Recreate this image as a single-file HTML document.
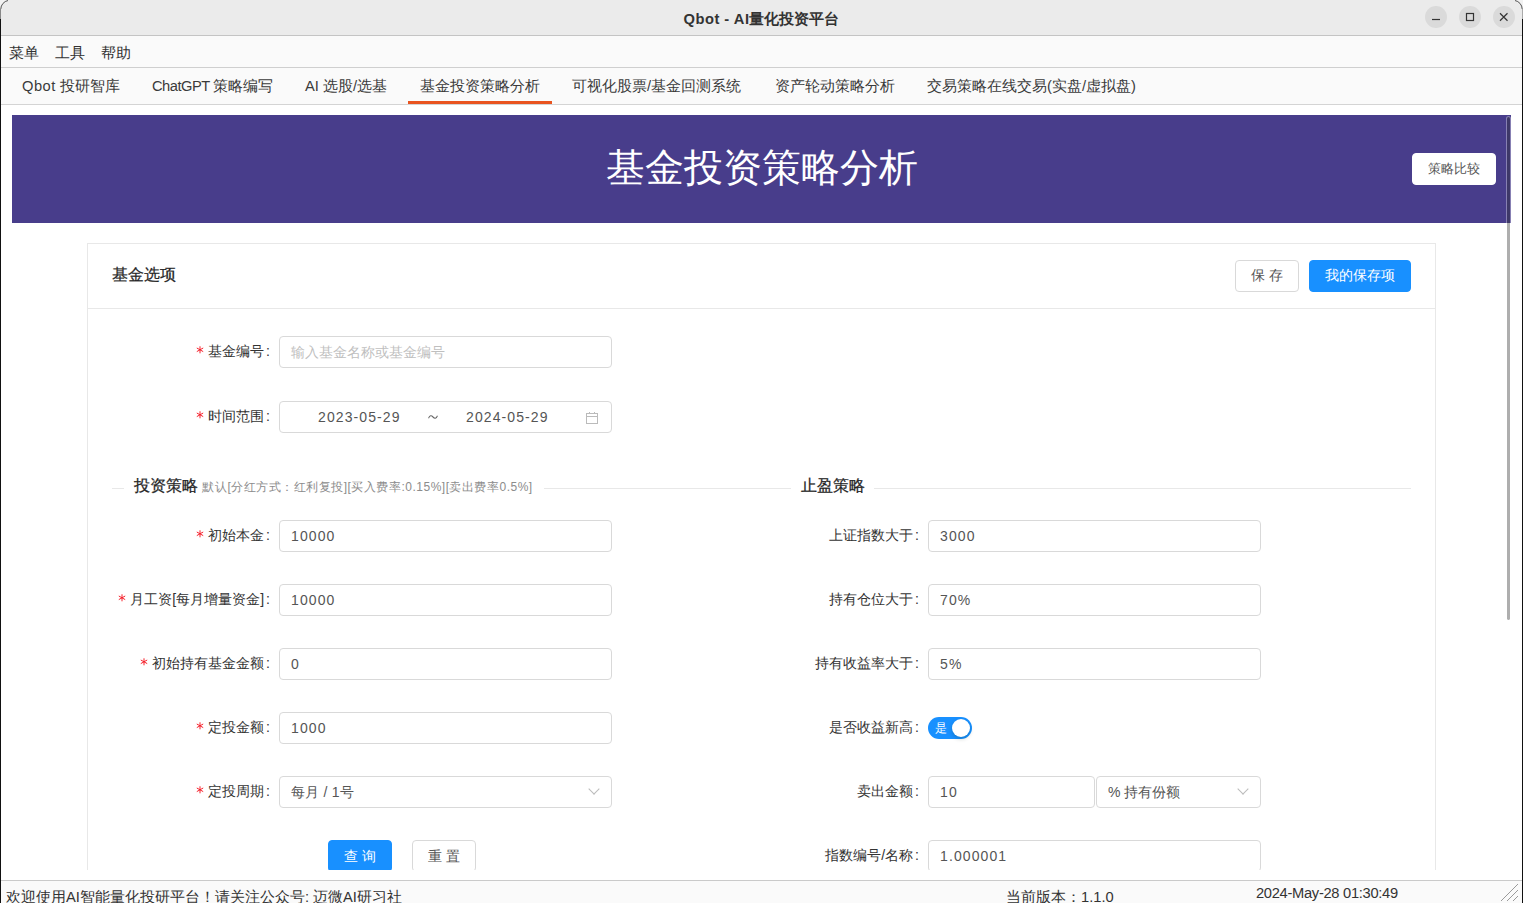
<!DOCTYPE html>
<html><head><meta charset="utf-8">
<style>
*{box-sizing:border-box;margin:0;padding:0}
html,body{width:1523px;height:903px;overflow:hidden;background:#fff;font-family:"Liberation Sans",sans-serif;}
.abs{position:absolute}
#titlebar{left:0;top:0;width:1523px;height:35px;background:#ebebeb;}
#title{left:0;top:0;width:1523px;height:35px;line-height:39px;text-align:center;font-weight:bold;font-size:14.7px;color:#333;}
.wbtn{width:22px;height:22px;border-radius:50%;background:#dadada;top:6px}
#l35{left:0;top:35px;width:1523px;height:1px;background:#c4c4c4}
#menubar{left:0;top:36px;width:1523px;height:31px;background:#fafafa}
.menu{top:36px;height:31px;line-height:34px;font-size:14.7px;color:#333}
#l67{left:0;top:67px;width:1523px;height:1px;background:#cfcfcf}
#tabbar{left:0;top:68px;width:1523px;height:36px;background:#fafafa}
.tab{top:68px;height:36px;line-height:37px;font-size:14.7px;color:#3a3a3a;white-space:nowrap}
#l104{left:0;top:104px;width:1523px;height:1px;background:#d4d4d4}
#web{left:1px;top:105px;width:1520px;height:765px;overflow:hidden;background:#fff}
#banner{left:11px;top:10px;width:1499px;height:108px;background:#483d8b}
#bantitle{left:11px;top:10px;width:1499px;height:108px;line-height:105px;text-align:center;color:#fff;font-size:39px}
.btn{border:1px solid #d9d9d9;border-radius:4px;background:#fff;color:#555;font-size:14px;text-align:center;white-space:nowrap}
#card{left:86px;top:138px;width:1349px;height:800px;border:1px solid #e8e8e8;}
#cardline{left:87px;top:203px;width:1347px;height:1px;background:#e8e8e8}
.lbl{font-size:14px;color:#333;text-align:right;height:32px;line-height:30px;white-space:nowrap}
.lbl i{font-style:normal;margin:0 10px 0 2px}
.req{margin-right:4px;vertical-align:2.5px}
.inp{height:32px;border:1px solid #d9d9d9;border-radius:4px;background:#fff;font-size:14px;color:#555;line-height:30px;padding-left:11px;white-space:nowrap;letter-spacing:1.1px}
.cn{letter-spacing:0}
.div-line{height:1px;background:#e8e8e8}
.chev{position:absolute;width:7px;height:7px;border-right:1px solid #bbb;border-bottom:1px solid #bbb;transform:rotate(45deg)}
#status{left:0;top:880px;width:1523px;height:23px;background:#fafafa;border-top:1px solid #cacaca}
.st{top:881px;font-size:14.7px;color:#333;line-height:32px;white-space:nowrap}
</style></head><body>
<div id="titlebar" class="abs"></div>
<div id="title" class="abs"><span style="letter-spacing:0.5px">Qbot - AI</span>量化投资平台</div>
<div class="abs wbtn" style="left:1425px"></div>
<div class="abs wbtn" style="left:1459px"></div>
<div class="abs wbtn" style="left:1493px"></div>
<svg class="abs" style="left:1420px;top:0" width="103" height="35" viewBox="0 0 103 35">
<line x1="12" y1="19.5" x2="20" y2="19.5" stroke="#333" stroke-width="1.2"/>
<rect x="46.5" y="13.5" width="7" height="7" fill="none" stroke="#333" stroke-width="1.2"/>
<path d="M80 13.3 L87.5 20.7 M87.5 13.3 L80 20.7" stroke="#333" stroke-width="1.2"/>
</svg>
<svg class="abs" style="left:0;top:0" width="12" height="20" viewBox="0 0 12 20"><path d="M0 0 H10 A10 10 0 0 0 0 10 Z" fill="#f2f2f2"/><path d="M8 0.5 A9 9 0 0 0 0.8 9" fill="none" stroke="#555" stroke-width="1"/><rect x="0" y="9" width="1" height="11" fill="#888"/></svg>
<svg class="abs" style="left:1511px;top:0" width="12" height="20" viewBox="0 0 12 20"><path d="M12 0 H2 A10 10 0 0 1 12 10 Z" fill="#f2f2f2"/><path d="M4 0.5 A9 9 0 0 1 11.2 9" fill="none" stroke="#555" stroke-width="1"/><rect x="11" y="9" width="1" height="11" fill="#aaa"/></svg>
<div id="l35" class="abs"></div>
<div id="menubar" class="abs"></div>
<div class="abs menu" style="left:9px">菜单</div>
<div class="abs menu" style="left:55px">工具</div>
<div class="abs menu" style="left:101px">帮助</div>
<div id="l67" class="abs"></div>
<div id="tabbar" class="abs"></div>
<div class="abs tab" style="left:22px"><span style="letter-spacing:0.5px">Qbot </span>投研智库</div>
<div class="abs tab" style="left:152px"><span style="letter-spacing:-0.5px">ChatGPT </span>策略编写</div>
<div class="abs tab" style="left:305px">AI 选股/选基</div>
<div class="abs tab" style="left:420px">基金投资策略分析</div>
<div class="abs tab" style="left:572px">可视化股票/基金回测系统</div>
<div class="abs tab" style="left:775px">资产轮动策略分析</div>
<div class="abs tab" style="left:927px">交易策略在线交易(实盘/虚拟盘)</div>
<div class="abs" style="left:408px;top:101px;width:144px;height:3px;background:#e95420"></div>
<div id="l104" class="abs"></div>

<div id="web" class="abs">
<div id="banner" class="abs"></div>
<div id="bantitle" class="abs">基金投资策略分析</div>
<div class="abs btn" style="left:1411px;top:48px;width:84px;height:32px;line-height:30px;border-color:#fff;font-size:13px">策略比较</div>

<div id="card" class="abs"></div>
<div id="cardline" class="abs"></div>
<div class="abs" style="left:111px;top:157px;font-size:16px;color:#262626;line-height:26px;-webkit-text-stroke:0.2px #262626">基金选项</div>
<div class="abs btn" style="left:1234px;top:155px;width:64px;height:32px;line-height:29px;letter-spacing:4px;padding-left:4px">保存</div>
<div class="abs btn" style="left:1308px;top:155px;width:102px;height:32px;line-height:29px;background:#1890ff;border-color:#1890ff;color:#fff">我的保存项</div>

<!-- row 1 -->
<div class="abs lbl" style="right:1241px;top:231px"><svg class="req" width="8" height="8" viewBox="0 0 8 8"><path d="M4 0.3 V7.3 M0.8 2 L7.2 5.6 M0.8 5.6 L7.2 2" stroke="#f5222d" stroke-width="1"/></svg>基金编号<i>:</i></div>
<div class="abs inp cn" style="left:278px;top:231px;width:333px;color:#bfbfbf">输入基金名称或基金编号</div>
<!-- row 2 -->
<div class="abs lbl" style="right:1241px;top:296px"><svg class="req" width="8" height="8" viewBox="0 0 8 8"><path d="M4 0.3 V7.3 M0.8 2 L7.2 5.6 M0.8 5.6 L7.2 2" stroke="#f5222d" stroke-width="1"/></svg>时间范围<i>:</i></div>
<div class="abs inp" style="left:278px;top:296px;width:333px;padding:0">
  <span class="abs" style="left:38px;top:0">2023-05-29</span>
  <svg class="abs" style="left:148px;top:12px" width="10" height="6" viewBox="0 0 11 6" preserveAspectRatio="none"><path d="M0.6 4.2 C2 1.2 3.8 1.2 5.5 3 C7.2 4.8 9 4.8 10.4 1.8" fill="none" stroke="#666" stroke-width="1.1"/></svg>
  <span class="abs" style="left:186px;top:0">2024-05-29</span>
  <svg class="abs" style="left:305px;top:9px" width="14" height="14" viewBox="0 0 14 14"><rect x="1.5" y="2.5" width="11" height="10" fill="none" stroke="#bbb"/><line x1="1.5" y1="5.5" x2="12.5" y2="5.5" stroke="#bbb"/><line x1="4.5" y1="1" x2="4.5" y2="3" stroke="#bbb"/><line x1="9.5" y1="1" x2="9.5" y2="3" stroke="#bbb"/></svg>
</div>

<!-- dividers -->
<div class="abs div-line" style="left:111px;top:383px;width:12px"></div>
<div class="abs" style="left:133px;top:368px;font-size:16px;color:#262626;line-height:26px;white-space:nowrap"><span style="-webkit-text-stroke:0.25px #262626">投资策略</span> <span style="font-size:12px;font-weight:normal;color:#8c8c8c;letter-spacing:0.5px">默认[分红方式：红利复投][买入费率:0.15%][卖出费率0.5%]</span></div>
<div class="abs div-line" style="left:543px;top:383px;width:247px"></div>
<div class="abs" style="left:800px;top:368px;font-size:16px;color:#262626;line-height:26px;-webkit-text-stroke:0.25px #262626">止盈策略</div>
<div class="abs div-line" style="left:873px;top:383px;width:537px"></div>

<!-- left rows -->
<div class="abs lbl" style="right:1241px;top:415px"><svg class="req" width="8" height="8" viewBox="0 0 8 8"><path d="M4 0.3 V7.3 M0.8 2 L7.2 5.6 M0.8 5.6 L7.2 2" stroke="#f5222d" stroke-width="1"/></svg>初始本金<i>:</i></div>
<div class="abs inp" style="left:278px;top:415px;width:333px">10000</div>
<div class="abs lbl" style="right:1241px;top:479px"><svg class="req" width="8" height="8" viewBox="0 0 8 8"><path d="M4 0.3 V7.3 M0.8 2 L7.2 5.6 M0.8 5.6 L7.2 2" stroke="#f5222d" stroke-width="1"/></svg>月工资[每月增量资金]<i>:</i></div>
<div class="abs inp" style="left:278px;top:479px;width:333px">10000</div>
<div class="abs lbl" style="right:1241px;top:543px"><svg class="req" width="8" height="8" viewBox="0 0 8 8"><path d="M4 0.3 V7.3 M0.8 2 L7.2 5.6 M0.8 5.6 L7.2 2" stroke="#f5222d" stroke-width="1"/></svg>初始持有基金金额<i>:</i></div>
<div class="abs inp" style="left:278px;top:543px;width:333px">0</div>
<div class="abs lbl" style="right:1241px;top:607px"><svg class="req" width="8" height="8" viewBox="0 0 8 8"><path d="M4 0.3 V7.3 M0.8 2 L7.2 5.6 M0.8 5.6 L7.2 2" stroke="#f5222d" stroke-width="1"/></svg>定投金额<i>:</i></div>
<div class="abs inp" style="left:278px;top:607px;width:333px">1000</div>
<div class="abs lbl" style="right:1241px;top:671px"><svg class="req" width="8" height="8" viewBox="0 0 8 8"><path d="M4 0.3 V7.3 M0.8 2 L7.2 5.6 M0.8 5.6 L7.2 2" stroke="#f5222d" stroke-width="1"/></svg>定投周期<i>:</i></div>
<div class="abs inp" style="left:278px;top:671px;width:333px;letter-spacing:0.2px">每月 / 1号<span class="chev" style="left:310px;top:8px;width:8px;height:8px"></span></div>
<div class="abs btn" style="left:327px;top:735px;width:64px;height:32px;line-height:30px;background:#1890ff;border-color:#1890ff;color:#fff;letter-spacing:4px;padding-left:4px">查询</div>
<div class="abs btn" style="left:411px;top:735px;width:64px;height:32px;line-height:30px;letter-spacing:4px;padding-left:4px">重置</div>

<!-- right rows -->
<div class="abs lbl" style="right:592px;top:415px">上证指数大于<i>:</i></div>
<div class="abs inp" style="left:927px;top:415px;width:333px">3000</div>
<div class="abs lbl" style="right:592px;top:479px">持有仓位大于<i>:</i></div>
<div class="abs inp" style="left:927px;top:479px;width:333px">70%</div>
<div class="abs lbl" style="right:592px;top:543px">持有收益率大于<i>:</i></div>
<div class="abs inp" style="left:927px;top:543px;width:333px">5%</div>
<div class="abs lbl" style="right:592px;top:607px">是否收益新高<i>:</i></div>
<div class="abs" style="left:927px;top:612px;width:44px;height:22px;border-radius:11px;background:#1890ff">
  <span class="abs" style="left:7px;top:0;line-height:22px;font-size:12px;color:#fff">是</span>
  <span class="abs" style="left:24px;top:2px;width:18px;height:18px;border-radius:50%;background:#fff;box-shadow:0 2px 4px rgba(0,35,11,.2)"></span>
</div>
<div class="abs lbl" style="right:592px;top:671px">卖出金额<i>:</i></div>
<div class="abs inp" style="left:927px;top:671px;width:167px">10</div>
<div class="abs inp cn" style="left:1095px;top:671px;width:165px">% 持有份额<span class="chev" style="left:142px;top:8px;width:8px;height:8px"></span></div>
<div class="abs lbl" style="right:592px;top:735px">指数编号/名称<i>:</i></div>
<div class="abs inp" style="left:927px;top:735px;width:333px">1.000001</div>

<div class="abs" style="left:1505px;top:11px;width:5px;height:505px;border-radius:3px;border:1px solid rgba(255,255,255,0.35);background:#aeaeae;background-clip:padding-box"></div><div class="abs" style="left:1506px;top:12px;width:3px;height:106px;border-radius:2px 2px 0 0;background:#3e3868"></div>
</div>

<div id="status" class="abs"></div>
<div class="abs st" style="left:6px">欢迎使用AI智能量化投研平台！请关注公众号: 迈微AI研习社</div>
<div class="abs st" style="left:1006px">当前版本：1.1.0</div>
<div class="abs st" style="left:1256px;line-height:24px;letter-spacing:-0.3px">2024-May-28 01:30:49</div>
<svg class="abs" style="left:1500px;top:883px" width="20" height="20" viewBox="0 0 20 20"><path d="M1 18 L18 1 M7 18 L18 7 M13 18 L18 13" stroke="#9a9a9a" stroke-width="1"/></svg>
<div class="abs" style="left:0;top:19px;width:1px;height:884px;background:#111"></div>
<div class="abs" style="left:1522px;top:19px;width:1px;height:884px;background:#111"></div>
</body></html>
